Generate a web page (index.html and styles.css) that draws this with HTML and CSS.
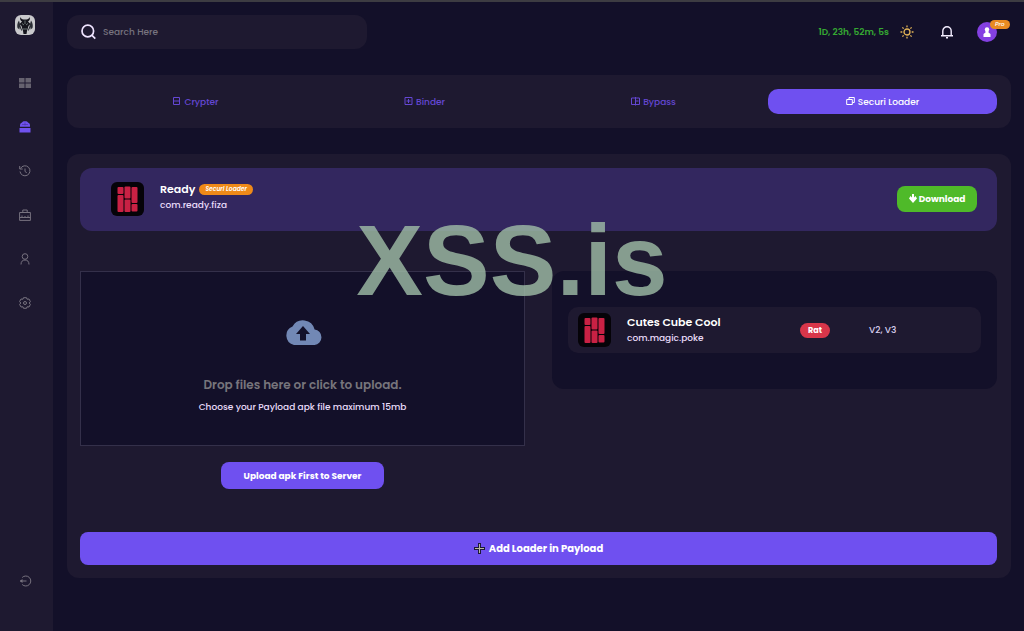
FILE: index.html
```html
<!DOCTYPE html>
<html lang="en">
<head>
    <meta charset="UTF-8">
    <meta name="viewport" content="width=device-width, initial-scale=1.0">
    <title>Securi Loader</title>
    <link rel="stylesheet" href="styles.css">
</head>
<body>
    <!-- shared app icon -->
    <svg class="defs" width="0" height="0" aria-hidden="true">
        <symbol id="app-icon" viewBox="0 0 33 34">
            <rect width="33" height="34" rx="6" fill="#050308"/>
            <g fill="#c92144">
                <rect x="6.500" y="5" width="6" height="7" rx="1"/>
                <rect x="6.500" y="13" width="6" height="17" rx="1"/>
                <rect x="13.500" y="4.500" width="6" height="12" rx="1"/>
                <rect x="13.500" y="17.500" width="6" height="12.500" rx="1"/>
                <rect x="20.500" y="5" width="6" height="16" rx="1"/>
                <rect x="20.500" y="22" width="6" height="7.500" rx="1"/>
            </g>
        </symbol>
    </svg>

    <aside class="sidebar">
        <a href="#" class="logo" aria-label="Home">
            <svg width="20" height="20" viewBox="0 0 20 20">
                <rect width="20" height="20" rx="6" fill="#c9c9cc"/>
                <path d="M5.500 2c-1 2 0 3.500 1.500 4.500L4.500 9l2 2L8 16l.5 3h3l.5-3 1.500-5 2-2L13 6.500c1.500-1 2.500-2.500 1.500-4.500-.3 1.500-1.500 2.500-3 2.500h-3C7 4.500 5.800 3.500 5.500 2z" fill="#15151d"/>
                <path d="M4 5.500Q1.500 9 2.500 13l2 1.500V12l2 4 .5-1-1.500-4zM16 5.500q2.500 3.500 1.500 7.500l-2 1.500V12l-2 4-.5-1 1.500-4z" fill="#2b2e35"/>
                <path d="M7 8.500l2 1.500M13 8.500L11 10M10 5.500V9M9 13v2M11 13v2" stroke="#8e9c98" stroke-width=".7" fill="none"/>
            </svg>
        </a>
        <nav class="side-nav">
            <a href="#" aria-label="Dashboard">
                <svg width="12" height="12" viewBox="0 0 12 12" fill="#66626f"><path d="M0 1h5.500v4.500H0zM6.500 1H12v4.500H6.500zM0 6.500h5.500V11H0zM6.500 6.500H12V11H6.500z"/></svg>
            </a>
            <a href="#" aria-label="Tools">
                <svg width="12" height="12" viewBox="0 0 12 12" fill="#7052ee"><path d="M1 5.700V4q0-2 2-2.500Q4 .3 5 .3h2q1 0 2 1.200 2 .5 2 2.500v1.700zM.5 7h11v4.500H.5z"/><path d="M3 3.500h6M6 1.500v3" stroke="#4935a5" stroke-width=".7"/></svg>
            </a>
            <a href="#" aria-label="History">
                <svg width="12" height="12" viewBox="0 0 12 12" class="line"><path d="M1.500 3.500A5 5 0 1 1 1 6.500M.7 1v3h3M6 3.500v3l1.800 1.300"/></svg>
            </a>
            <a href="#" aria-label="Jobs">
                <svg width="12" height="12" viewBox="0 0 12 12" class="line"><path d="M.6 3.500h10.800v7.900H.6zM3.800 3.500V1h4.400v2.500M.6 8.500h10.800M3 6.500v2M6 7v1.500M9 6.500v2"/></svg>
            </a>
            <a href="#" aria-label="Profile">
                <svg width="12" height="12" viewBox="0 0 12 12" class="line"><circle cx="6" cy="3.500" r="2.800"/><path d="M2 11.500C2 8.500 3.500 7 6 7s4 1.500 4 4.500"/></svg>
            </a>
            <a href="#" aria-label="Settings">
                <svg width="12" height="12" viewBox="0 0 12 12" class="line"><path d="M4.500.7h3L8 2.200l2-.2 1.400 2.600L10.200 6l1.200 1.400L10 10l-2-.2-.5 1.500h-3L4 9.800 2 10 .6 7.400 1.800 6 .6 4.600 2 2l2 .2z"/><circle cx="6" cy="6" r="1.500"/></svg>
            </a>
        </nav>
        <a href="#" class="logout" aria-label="Log out">
            <svg width="13" height="12" viewBox="0 0 13 12" class="line"><path d="M3.200 2.500a5 5 0 1 1 0 7M7.500 6H1"/><path d="M3.500 4L.8 6l2.700 2z" fill="#77727f" stroke="none"/></svg>
        </a>
    </aside>

    <main class="main">
        <header class="topbar">
            <label class="search">
                <svg width="15" height="16" viewBox="0 0 15 16" fill="none" stroke="#efe4ff" stroke-width="1.700"><circle cx="6.800" cy="7" r="5.800"/><path d="M10.800 11.200l3.500 3.500"/></svg>
                <input type="search" placeholder="Search Here" aria-label="Search">
            </label>
            <div class="status">
                <span class="timer">1D, 23h, 52m, 5s</span>
                <button class="icon-button" aria-label="Theme">
                    <svg width="14" height="14" viewBox="0 0 14 14" fill="none" stroke="#e2b356" stroke-width="1.300"><circle cx="7" cy="7" r="3"/><path d="M7 .5v1.800M7 11.700v1.800M.5 7h1.800M11.700 7h1.800M2.400 2.400l1.200 1.200M10.400 10.400l1.200 1.200M2.400 11.600l1.200-1.200M10.400 3.600l1.200-1.200"/></svg>
                </button>
                <button class="icon-button bell" aria-label="Notifications">
                    <svg width="14" height="14" viewBox="0 0 14 14" fill="none" stroke="#f4eeff" stroke-width="1.400"><path d="M2.800 10.800V6a4.200 4.200 0 0 1 8.400 0v4.800M1 10.800h12M6 12.700h2"/></svg>
                </button>
                <button class="avatar" aria-label="Account">
                    <svg width="8" height="10" viewBox="0 0 8 10" fill="#fff"><circle cx="4" cy="2.500" r="2.200"/><path d="M2.500 4h3v1.500L7.500 7v3h-7V7l2-1.500z"/></svg>
                    <span class="pro">Pro</span>
                </button>
            </div>
        </header>

        <nav class="tabs">
            <a href="#" class="tab">
                <svg width="9" height="9" viewBox="0 0 9 9"><path d="M1.500.5h6v7h-6zM1 4h7"/></svg>
                Crypter
            </a>
            <a href="#" class="tab">
                <svg width="9" height="9" viewBox="0 0 9 9"><path d="M1 .5h7v7H1zM2.500 4h4M4.500 2v4"/></svg>
                Binder
            </a>
            <a href="#" class="tab">
                <svg width="9" height="9" viewBox="0 0 9 9"><path d="M.5 1h8v6.500h-8zM4.500 0v8.500M4.500 4h3"/></svg>
                Bypass
            </a>
            <a href="#" class="tab active">
                <svg width="9" height="9" viewBox="0 0 9 9"><path d="M3 2.500V.5h5.300v5H6.500M.7 2.500h5.600v5H.7z"/></svg>
                Securi Loader
            </a>
        </nav>

        <section class="card">
            <div class="ready">
                <svg width="33" height="34"><use href="#app-icon"/></svg>
                <div class="app-text">
                    <div class="app-title">Ready <span class="tag">Securi Loader</span></div>
                    <div class="app-id">com.ready.fiza</div>
                </div>
                <button class="download">
                    <svg width="8" height="10" viewBox="0 0 8 10" fill="#fff"><path d="M3 0h2v3.500L6.500 2 8 4.500 4 9 0 4.500 1.500 2 3 3.500z"/></svg>
                    Download
                </button>
            </div>

            <div class="columns">
                <div class="upload">
                    <label class="dropzone">
                        <input type="file" class="file-input" accept=".apk">
                        <svg width="38" height="26" viewBox="0 0 38 26"><path d="M30.600 9.500A12 12 0 0 0 8.500 6.500 9.700 9.700 0 0 0 10 25h20.500A7.800 7.800 0 0 0 30.600 9.500z" fill="#7288b5"/><path d="M19 6l7 8h-4v6.500h-6V14h-4z" fill="#131029"/></svg>
                        <span class="drop-title">Drop files here or click to upload.</span>
                        <span class="drop-note">Choose your Payload apk file maximum 15mb</span>
                    </label>
                    <button class="upload-button">Upload apk First to Server</button>
                </div>

                <div class="panel">
                    <div class="app-row">
                        <svg width="33" height="34"><use href="#app-icon"/></svg>
                        <div class="app-text">
                            <div class="app-title">Cutes Cube Cool</div>
                            <div class="app-id">com.magic.poke</div>
                        </div>
                        <span class="rat">Rat</span>
                        <span class="versions">V2, V3</span>
                    </div>
                </div>
            </div>

            <button class="add-button">
                <svg width="11" height="11" viewBox="0 0 11 11"><path d="M4 0h3v4h4v3H7v4H4V7H0V4h4z" fill="#1c1838"/><path d="M5.500 1v9M1 5.500h9" stroke="#b9b6a0"/></svg>
                Add Loader in Payload
            </button>
        </section>
    </main>

    <div class="watermark">XSS.is</div>
</body>
</html>
```

FILE: styles.css
```css
* {
    box-sizing: border-box;
}

body {
    margin: 0;
    min-height: 100vh;
    display: flex;
    border-top: 2px solid #3d3c42;
    background-color: #131029;
    color: #fff;
    font-family: Poppins, Inter, sans-serif;
    font-size: 9px;
    line-height: 16px;
}

a {
    color: inherit;
    text-decoration: none;
}

button {
    border: none;
    padding: 0;
    background: none;
    color: #fff;
    font: inherit;
    cursor: pointer;
}

svg {
    display: block;
    flex: none;
}

.defs {
    position: absolute;
}

.line {
    fill: none;
    stroke: #77727f;
    stroke-width: 1;
}

/* Sidebar */
.sidebar {
    width: 53px;
    flex: none;
    display: flex;
    flex-direction: column;
    align-items: center;
    padding: 13px 3px 44px 0;
    background-color: #1e1930;
}

.side-nav {
    display: flex;
    flex-direction: column;
    gap: 32px;
    margin-top: 42px;
}

.logout {
    margin-top: auto;
}

.main {
    flex: 1;
    min-width: 0;
    padding: 13px 13px 20px 14px;
}

/* Top bar */
.topbar {
    display: flex;
    align-items: center;
    justify-content: space-between;
    margin-bottom: 26px;
}

.search {
    width: 300px;
    height: 34px;
    display: flex;
    align-items: center;
    gap: 7px;
    padding: 0 14px;
    border-radius: 12px;
    background-color: #1e1930;
}

.search input {
    flex: 1;
    min-width: 0;
    padding: 0;
    border: none;
    outline: none;
    background: none;
    color: #fff;
    font: inherit;
    font-weight: 500;
}

.search input::placeholder {
    color: #77737f;
}

.status {
    display: flex;
    align-items: center;
    padding-right: 14px;
}

.timer {
    margin-right: 11px;
    color: #35a832;
    font-weight: 600;
}

.bell {
    margin: 0 23px 0 26px;
}

.avatar {
    position: relative;
    width: 20px;
    height: 20px;
    display: flex;
    align-items: center;
    justify-content: center;
    border-radius: 50%;
    background-color: #8440e2;
}

.pro {
    position: absolute;
    top: -2px;
    left: 13px;
    padding: 0 5px;
    border-radius: 5px;
    background-color: #e88a22;
    font-size: 6px;
    font-style: italic;
    font-weight: 500;
    line-height: 9px;
}

/* Tabs */
.tabs {
    display: flex;
    margin-bottom: 26px;
    padding: 14px;
    border-radius: 12px;
    background-color: #1e1930;
}

.tab {
    flex: 1;
    display: flex;
    align-items: center;
    justify-content: center;
    gap: 3px;
    height: 25px;
    border-radius: 10px;
    color: #6447d3;
    font-weight: 500;
}

.tab svg {
    fill: none;
    stroke: currentColor;
    stroke-width: 1;
}

.tab.active {
    background-color: #6f50f0;
    color: #fff;
}

/* Loader card */
.card {
    padding: 14px 14px 13px 13px;
    border-radius: 12px;
    background-color: #1e1930;
}

.ready {
    display: flex;
    align-items: center;
    gap: 16px;
    height: 63px;
    padding: 0 20px 2px 31px;
    border-radius: 12px;
    background-color: #33275f;
}

.ready .app-text {
    padding-bottom: 3px;
}

.app-title {
    display: flex;
    align-items: center;
    gap: 4px;
    font-size: 11px;
    font-weight: 600;
}

.app-id {
    color: #e9dcfa;
    font-weight: 500;
}

.tag {
    padding: 0 6px;
    border-radius: 6px;
    background-color: #ef8a18;
    font-size: 6px;
    font-style: italic;
    font-weight: 600;
    line-height: 11px;
}

.download {
    display: flex;
    align-items: center;
    justify-content: center;
    gap: 2px;
    width: 80px;
    height: 26px;
    margin-left: auto;
    border-radius: 8px;
    background-color: #4fba29;
    font-weight: 700;
}

.columns {
    display: grid;
    grid-template-columns: 1fr 1fr;
    align-items: start;
    gap: 27px;
    margin: 40px 0 43px;
}

.upload {
    display: flex;
    flex-direction: column;
    align-items: center;
    gap: 16px;
}

.dropzone {
    width: 100%;
    display: flex;
    flex-direction: column;
    align-items: center;
    padding: 48px 20px 30px;
    border: 1px solid #34304a;
    background-color: #131029;
    cursor: pointer;
}

.file-input {
    position: absolute;
    opacity: 0;
    width: 1px;
    height: 1px;
}

.drop-title {
    margin: 31px 0 6px;
    color: #77757c;
    font-size: 12px;
    font-weight: 600;
}

.drop-note {
    color: #e9dcfa;
    font-weight: 500;
}

.upload-button {
    width: 163px;
    height: 27px;
    border-radius: 8px;
    background-color: #6f50f0;
    font-weight: 700;
}

.panel {
    padding: 36px 16px;
    border-radius: 12px;
    background-color: #131029;
}

.app-row {
    display: grid;
    grid-template-columns: 33px 157px 53px 1fr;
    align-items: center;
    justify-items: start;
    column-gap: 16px;
    height: 46px;
    padding: 0 10px;
    border-radius: 10px;
    background-color: #1e1930;
}

.rat {
    padding: 0 8px;
    border-radius: 8px;
    background-color: #d8364a;
    font-size: 8px;
    font-weight: 700;
    line-height: 15px;
}

.versions {
    color: #d9cfee;
    font-weight: 500;
}

.add-button {
    width: 100%;
    height: 33px;
    display: flex;
    align-items: center;
    justify-content: center;
    gap: 4px;
    border-radius: 8px;
    background-color: #6f50f0;
    font-size: 10px;
    font-weight: 700;
}

/* Overlay text */
.watermark {
    position: fixed;
    inset: 0 0 112px;
    display: flex;
    align-items: center;
    justify-content: center;
    color: rgba(160, 190, 167, 0.8);
    font-family: "Liberation Sans", Arial, sans-serif;
    font-size: 100px;
    font-weight: 700;
    line-height: 100px;
    pointer-events: none;
}
```
